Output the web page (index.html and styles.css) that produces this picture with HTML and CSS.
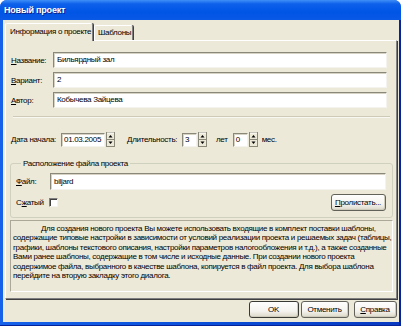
FILE: index.html
```html
<!DOCTYPE html>
<html lang="ru">
<head>
    <meta charset="UTF-8">
    <title>Новый проект</title>
    <link rel="stylesheet" href="styles.css">
</head>
<body>
    <div class="window">
        <div class="titlebar">
            <span class="title">Новый проект</span>
        </div>
        <div class="frame">
            <div class="client">
                <!-- Tabs -->
                <div class="tabs">
                    <div class="tab active">Информация о проекте</div>
                    <div class="tab">Шаблоны</div>
                </div>

                <div class="panel">
                    <!-- Project fields -->
                    <div class="field">
                        <label><u>Н</u>азвание:</label>
                        <div class="edit">Бильярдный зал</div>
                    </div>
                    <div class="field">
                        <label><u>В</u>ариант:</label>
                        <div class="edit">2</div>
                    </div>
                    <div class="field">
                        <label><u>А</u>втор:</label>
                        <div class="edit">Кобычева Зайцева</div>
                    </div>

                    <div class="separator"></div>

                    <!-- Dates -->
                    <div class="dates">
                        <label class="date-label"><u>Д</u>ата начала:</label>
                        <div class="edit small date">01.03.2005</div>
                        <svg class="spin" width="9" height="15" viewBox="0 0 9 15">
                            <rect x="0.5" y="0.5" width="8" height="14" fill="#ece9d8" stroke="#8a8878"/>
                            <line x1="1" y1="1" x2="8" y2="1" stroke="#fff"/>
                            <line x1="1" y1="7.5" x2="8" y2="7.5" stroke="#8a8878"/>
                            <path d="M2.5 5.5h4l-2-2.5z" fill="#000"/>
                            <path d="M2.5 9.5h4l-2 2.5z" fill="#000"/>
                        </svg>
                        <label class="dur-label"><u>Д</u>лительность:</label>
                        <div class="edit small num">3</div>
                        <svg class="spin" width="9" height="15" viewBox="0 0 9 15">
                            <rect x="0.5" y="0.5" width="8" height="14" fill="#ece9d8" stroke="#8a8878"/>
                            <line x1="1" y1="1" x2="8" y2="1" stroke="#fff"/>
                            <line x1="1" y1="7.5" x2="8" y2="7.5" stroke="#8a8878"/>
                            <path d="M2.5 5.5h4l-2-2.5z" fill="#000"/>
                            <path d="M2.5 9.5h4l-2 2.5z" fill="#000"/>
                        </svg>
                        <span class="unit">лет</span>
                        <div class="edit small num">0</div>
                        <svg class="spin" width="9" height="15" viewBox="0 0 9 15">
                            <rect x="0.5" y="0.5" width="8" height="14" fill="#ece9d8" stroke="#8a8878"/>
                            <line x1="1" y1="1" x2="8" y2="1" stroke="#fff"/>
                            <line x1="1" y1="7.5" x2="8" y2="7.5" stroke="#8a8878"/>
                            <path d="M2.5 5.5h4l-2-2.5z" fill="#000"/>
                            <path d="M2.5 9.5h4l-2 2.5z" fill="#000"/>
                        </svg>
                        <span class="unit">мес.</span>
                    </div>

                    <!-- File location -->
                    <fieldset class="group">
                        <legend>Расположение файла проекта</legend>
                        <div class="file-row">
                            <label><u>Ф</u>айл:</label>
                            <div class="edit">biljard</div>
                        </div>
                        <div class="pack-row">
                            <label>С<u>ж</u>атый</label>
                            <span class="checkbox"></span>
                            <button class="btn browse" type="button"><u>П</u>ролистать...</button>
                        </div>
                    </fieldset>

                    <!-- Hint -->
                    <div class="hint">
                        <p>Для создания нового проекта Вы можете использовать входящие в комплект поставки шаблоны,<br>
                        содержащие типовые настройки в зависимости от условий реализации проекта и решаемых задач (таблицы,<br>
                        графики, шаблоны текстового описания, настройки параметров налогообложения и т.д.), а также созданные<br>
                        Вами ранее шаблоны, содержащие в том числе и исходные данные. При создании нового проекта<br>
                        содержимое файла, выбранного в качестве шаблона, копируется в файл проекта. Для выбора шаблона<br>
                        перейдите на вторую закладку этого диалога.</p>
                    </div>
                </div>

                <!-- Dialog buttons -->
                <div class="buttons">
                    <button class="btn ok" type="button">OK</button>
                    <button class="btn cancel" type="button">Отменить</button>
                    <button class="btn help" type="button"><u>С</u>правка</button>
                </div>
            </div>
        </div>
    </div>
</body>
</html>
```

FILE: styles.css
```css
/* Reset */
* {
    margin: 0;
    padding: 0;
    box-sizing: border-box;
}

body {
    width: 401px;
    height: 326px;
    overflow: hidden;
    background-color: #fff;
    font-family: "Liberation Sans", Arial, sans-serif;
    font-size: 8px;
    letter-spacing: -0.3px;
    color: #000;
}

u {
    text-decoration: underline;
}

/* Window frame */
.window {
    height: 326px;
    display: flex;
    flex-direction: column;
    border-radius: 7px 7px 0 0;
    overflow: hidden;
    background-color: #0a4fd8;
}

.titlebar {
    height: 20px;
    flex: none;
    display: flex;
    align-items: center;
    padding-left: 4px;
    background: linear-gradient(#3f8ff7 0%, #0c60ea 20%, #0055e5 60%, #0a58e6 100%);
}

.title {
    font-size: 9px;
    font-weight: bold;
    letter-spacing: -0.2px;
    color: #fff;
    text-shadow: 1px 1px 0 #0a1f8a;
}

.frame {
    flex: 1;
    display: flex;
    padding: 0 6px 4px 3px;
    background: linear-gradient(to right, #1662e8, #0a4fd8 50%, #0838c0);
    box-shadow: inset -2px 0 0 #06239a, inset 0 -1px 0 #06239a;
}

.client {
    flex: 1;
    display: flex;
    flex-direction: column;
    padding: 3px 2px 0 2px;
    background-color: #ece9d8;
}

/* Tabs */
.tabs {
    height: 17px;
    display: flex;
    align-items: flex-end;
    position: relative;
    z-index: 1;
}

.tab {
    height: 15px;
    padding: 0 3px;
    line-height: 14px;
    white-space: nowrap;
    border-left: 1px solid #fff;
    border-top: 1px solid #fff;
    border-right: 1px solid #808080;
    box-shadow: 1px 0 0 #404040;
    border-radius: 2px 2px 0 0;
    background-color: #ece9d8;
}

.tab.active {
    height: 18px;
    margin-bottom: -1px;
    padding: 0 3px 0 4px;
    line-height: 16px;
    width: 88px;
}

.tab + .tab {
    margin-left: 1px;
    width: 39px;
}

/* Tab page */
.panel {
    height: 259px;
    flex: none;
    padding: 11px 3px 0 4px;
    border-left: 1px solid #fff;
    border-top: 1px solid #fff;
    border-right: 1px solid #808080;
    border-bottom: 1px solid #808080;
    box-shadow: 1px 1px 0 #404040;
    background-color: #ece9d8;
}

.field {
    display: flex;
    align-items: center;
    padding: 0 6px 0 1px;
    margin-bottom: 4px;
}

.field label {
    width: 42px;
    flex: none;
}

/* Edit boxes */
.edit {
    height: 16px;
    flex: 1;
    padding: 0 3px;
    line-height: 14px;
    white-space: nowrap;
    background-color: #fff;
    border-top: 1px solid #8a8878;
    border-left: 1px solid #8a8878;
    border-right: 1px solid #f4f3ee;
    border-bottom: 1px solid #f4f3ee;
    box-shadow: inset 1px 1px 0 #d6d3c4;
}

.separator {
    height: 2px;
    margin: 8px 3px 0 3px;
    border-top: 1px solid #cdcab9;
    border-bottom: 1px solid #f8f7f1;
}

/* Dates row */
.dates {
    display: flex;
    align-items: center;
    height: 15px;
    margin-top: 14px;
    padding-left: 1px;
}

.edit.small {
    flex: none;
    height: 14px;
    line-height: 12px;
    padding: 0 2px;
}

.date-label {
    width: 50px;
}

.edit.date {
    width: 44px;
}

.spin {
    flex: none;
    margin-left: 1px;
    display: block;
}

.dur-label {
    margin-left: 12px;
    width: 55px;
}

.edit.num {
    width: 15px;
}

.unit {
    margin: 0 5px 0 9px;
}

.unit:last-child {
    margin-left: 4px;
}

/* Group box */
.group {
    height: 59px;
    margin: 12px 0 0 0;
    padding: 5px 6px 0 5px;
    border: 1px solid #d0d0bf;
    border-radius: 3px;
}

.group legend {
    padding: 0 2px;
    margin-left: 5px;
}

.file-row {
    display: flex;
    align-items: center;
}

.file-row label {
    width: 34px;
    flex: none;
}

.file-row .edit {
    height: 17px;
    line-height: 15px;
}

.pack-row {
    display: flex;
    align-items: center;
    margin-top: 4px;
}

.pack-row label {
    width: 33px;
}

.checkbox {
    width: 9px;
    height: 9px;
    background-color: #fff;
    border-top: 1px solid #808080;
    border-left: 1px solid #808080;
    border-right: 1px solid #f4f3ee;
    border-bottom: 1px solid #f4f3ee;
    box-shadow: inset 1px 1px 0 #404040;
}

/* Buttons */
.btn {
    height: 17px;
    font-family: inherit;
    font-size: 8px;
    letter-spacing: -0.3px;
    color: #000;
    border: 1px solid #62625a;
    border-radius: 3px;
    background: linear-gradient(#fefefe, #f4f3ee 60%, #dcd8c8);
    box-shadow: inset -1px -1px 0 #cfcbbb;
}

.browse {
    width: 55px;
    margin-left: auto;
}

/* Hint text */
.hint {
    height: 72px;
    margin-top: 2px;
    padding: 3px 0 0 2px;
    border-top: 1px solid #aca899;
    border-left: 1px solid #aca899;
    border-right: 1px solid #fff;
    border-bottom: 1px solid #fff;
}

.hint p {
    white-space: nowrap;
    line-height: 9.4px;
    text-indent: 28px;
}

.buttons {
    display: flex;
    justify-content: flex-end;
    margin-top: 2px;
}

.ok {
    width: 50px;
    border-color: #3a3a34;
}

.cancel {
    width: 48px;
    margin-left: 2px;
}

.help {
    width: 43px;
    margin-left: 5px;
}
```
